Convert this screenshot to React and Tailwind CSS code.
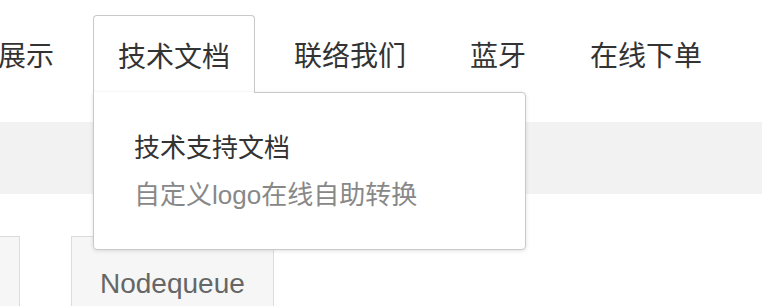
import React from 'react';

const navItems = ['展示', '技术文档', '联络我们', '蓝牙', '在线下单'];
const cjk = { fontFamily: '"Noto Sans CJK SC", "Noto Sans", sans-serif' };
const mixed = { fontFamily: '"Liberation Sans", "Noto Sans CJK SC", sans-serif' };

const DocsMenu = () => (
  <div
    className="absolute left-[-1px] top-[76px] z-10 w-[433px] h-[158px] bg-white border border-[#c9c9c9] rounded-[4px] rounded-tl-none shadow-[0_1px_4px_rgba(0,0,0,0.12)] pl-10 pt-[32px]"
    style={mixed}
  >
    <a className="block text-[26px] leading-[47px] text-[#333] whitespace-nowrap">技术支持文档</a>
    <a className="block text-[26px] leading-[47px] text-[#888] whitespace-nowrap">自定义logo在线自助转换</a>
  </div>
);

export default function App() {
  return (
    <div className="w-[762px] h-[306px] overflow-hidden bg-white" style={cjk}>
      <header className="relative z-10 h-[122px] pt-[15px]">
        <ul className="flex gap-[14px] ml-[-27px]">
          {navItems.map((item) => {
            const active = item === '技术文档';
            return (
              <li
                key={item}
                className={
                  active
                    ? 'relative h-[78px] px-6 flex items-center border border-b-0 border-[#c9c9c9] rounded-t-[4px] bg-white'
                    : 'relative h-[78px] px-6 flex items-center border border-transparent'
                }
              >
                <span className="text-[28px] leading-none text-[#333] whitespace-nowrap">{item}</span>
                {active && (
                  <>
                    <DocsMenu />
                    <div className="absolute left-0 right-0 top-[76px] h-[2px] bg-white z-20" />
                  </>
                )}
              </li>
            );
          })}
        </ul>
      </header>

      <div className="h-[72px] bg-[#f2f2f2]" />

      <div className="flex gap-[51px] ml-[-80px] mt-[42px]">
        <div className="w-[100px] h-[120px] bg-[#f6f6f6] border border-[#dcdcdc]" />
        <div
          className="h-[120px] px-7 pt-[26px] bg-[#f6f6f6] border border-[#dcdcdc] text-[28px] leading-[42px] text-[#666]"
          style={{ fontFamily: '"Liberation Sans", Arial, sans-serif' }}
        >
          Nodequeue
        </div>
      </div>
    </div>
  );
}
